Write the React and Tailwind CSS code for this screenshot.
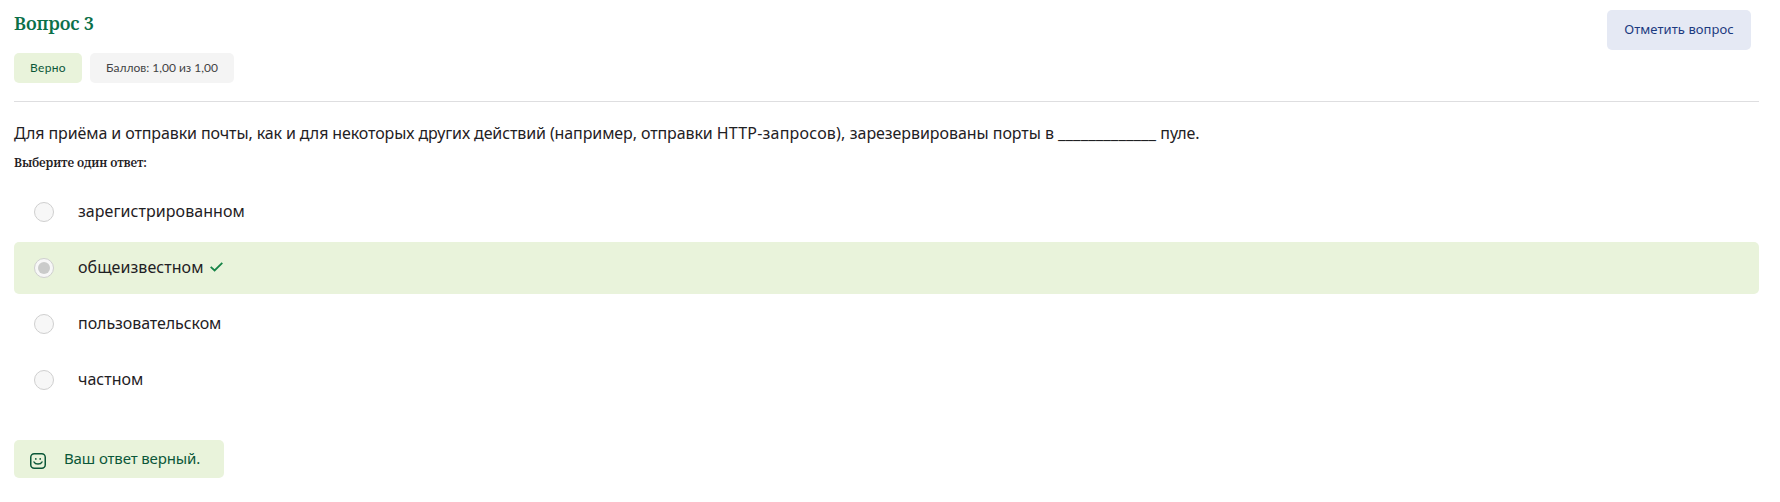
const answers = [
  { text: 'зарегистрированном', spacing: 'tracking-[0.06px]' },
  { text: 'общеизвестном', spacing: 'tracking-[0.06px]', chosen: true },
  { text: 'пользовательском', spacing: 'tracking-[-0.07px]' },
  { text: 'частном', spacing: 'tracking-normal' },
];

function Radio({ checked }) {
  return (
    <span className="flex size-5 shrink-0 items-center justify-center rounded-full border border-[#cfcfcf] bg-[#f7f7f7]">
      {checked && <span className="size-3 rounded-full bg-[#cacbca]" />}
    </span>
  );
}

function CheckIcon() {
  return (
    <svg className="mb-[2px] ml-[6px] h-[10px] w-[13px] shrink-0" viewBox="0 0 13 10" fill="none" stroke="#168447" strokeWidth="1.8">
      <path d="M0.7 4.8 4.6 8.4 12.3 0.8" />
    </svg>
  );
}

function SmileIcon() {
  return (
    <svg className="mt-[3px] size-4 shrink-0" viewBox="0 0 16 16" fill="none" stroke="#0b5739" strokeWidth="1.5" strokeLinecap="round">
      <rect x="0.75" y="0.75" width="14.5" height="14.5" rx="3.5" />
      <path d="M4 9C5.4 11.8 10.6 11.8 12 9" />
      <path d="M5.8 5.9h.01M10.2 5.9h.01" strokeWidth="1.7" />
    </svg>
  );
}

export default function App() {
  return (
    <main className="h-[502px] overflow-hidden bg-white pr-[21px] pl-[14px] pt-[10px] font-['Noto_Sans',sans-serif] text-[#1f2124]">
      <header className="flex h-[92px] items-start justify-between border-b border-[#dedee0]">
        <div>
          <h2 className="h-[43px] whitespace-nowrap font-['Noto_Serif','DejaVu_Serif',serif] text-[18px] leading-[26px] font-semibold tracking-[-0.16px] text-[#0b7049]">Вопрос 3</h2>
          <div className="flex gap-2 font-['Lato',sans-serif] text-[12px] leading-[30px] whitespace-nowrap">
            <span className="h-[30px] w-[68px] rounded-[5px] bg-[#e9f3db] text-center tracking-[0.3px] text-[#0b5739]">Верно</span>
            <span className="h-[30px] w-[144px] rounded-[5px] bg-[#f4f4f4] text-center text-[#424345]">Баллов: 1,00 из 1,00</span>
          </div>
        </div>
        <button className="mr-[8px] h-10 w-36 rounded-[5px] bg-[#e5e9f4] text-[13px] tracking-[0.07px] text-[#1c3a80] whitespace-nowrap">Отметить вопрос</button>
      </header>
      <p className="mt-[19px] h-6 text-[16px] leading-6 tracking-[-0.055px] whitespace-nowrap">
        <span className="tracking-[-0.107px]">Для приёма и отправки почты, как и для некоторых других действий (например, отправки </span>
        <span className="tracking-[0.21px]">HTTP-запросов), </span>
        зарезервированы порты в <span className="text-[17px] tracking-normal">_____________</span> пуле.
      </p>
      <h3 className="mt-[8px] h-5 font-['Noto_Serif','DejaVu_Serif',serif] text-[12px] leading-5 font-semibold tracking-[-0.15px] whitespace-nowrap">Выберите один ответ:</h3>
      <div className="mt-[13px] flex flex-col gap-1">
        {answers.map((a) => (
          <label key={a.text} className={`flex h-[52px] items-center rounded-[5px] pl-5 ${a.chosen ? 'bg-[#e9f3db]' : ''}`}>
            <Radio checked={a.chosen} />
            <span className={`ml-6 pb-[2px] text-[16px] leading-6 ${a.spacing}`}>{a.text}</span>
            {a.chosen && <CheckIcon />}
          </label>
        ))}
      </div>
      <div className="mt-[34px] flex h-[38px] w-[210px] items-center rounded-[5px] bg-[#e9f3db] pl-4 text-[#0b5739]">
        <SmileIcon />
        <span className="ml-[18px] pb-[2px] text-[15px] leading-6 tracking-[-0.13px] whitespace-nowrap">Ваш ответ верный.</span>
      </div>
    </main>
  );
}
